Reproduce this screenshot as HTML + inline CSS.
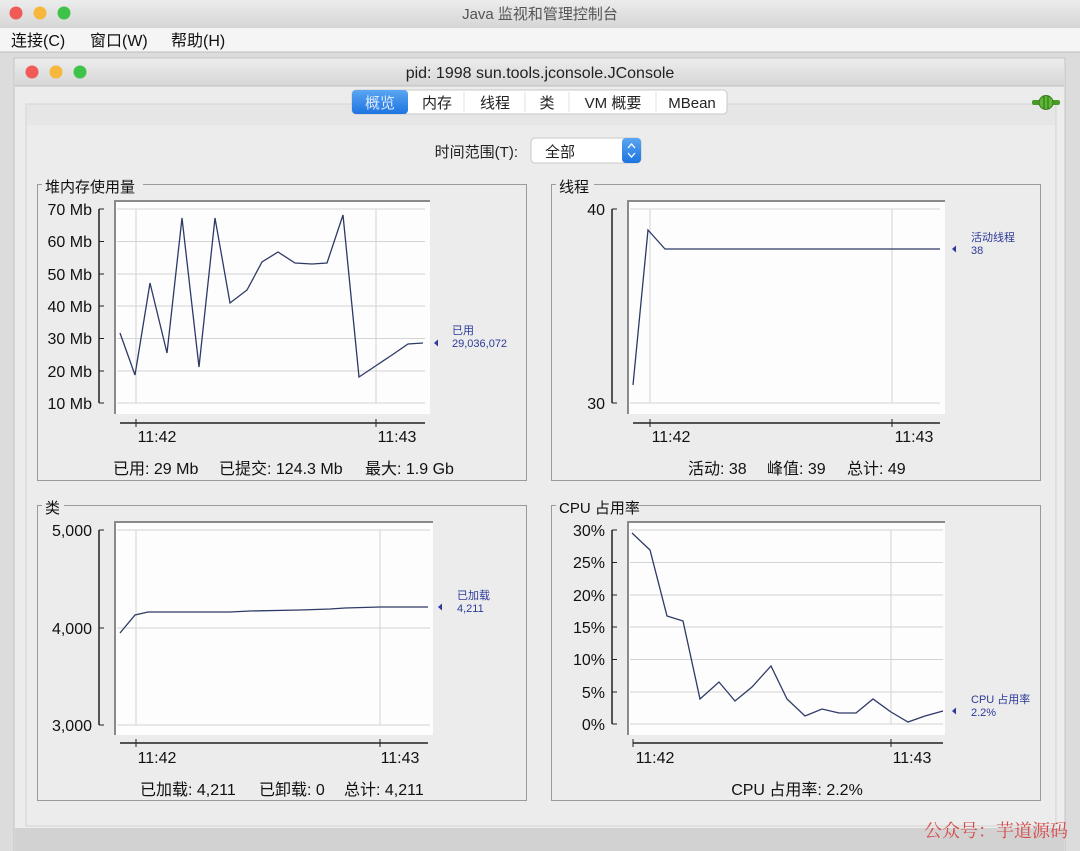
<!DOCTYPE html>
<html><head><meta charset="utf-8"><style>
html,body{margin:0;padding:0;background:#dedede;}
svg{display:block;font-family:"Liberation Sans","Noto Sans CJK SC",sans-serif;}
</style></head><body>
<svg width="1080" height="851" viewBox="0 0 1080 851" xmlns="http://www.w3.org/2000/svg">
<defs>
<linearGradient id="tb" x1="0" y1="0" x2="0" y2="1"><stop offset="0" stop-color="#ececec"/><stop offset="1" stop-color="#d6d6d6"/></linearGradient>
<linearGradient id="blue" x1="0" y1="0" x2="0" y2="1"><stop offset="0" stop-color="#5aa6f2"/><stop offset="1" stop-color="#1e74e0"/></linearGradient>
</defs>
<rect x="0" y="0" width="1080" height="851" fill="#dcdcdc"/>
<rect x="0" y="0" width="1080" height="28" fill="url(#tb)"/>
<circle cx="16" cy="13" r="6.5" fill="#f05c55"/><circle cx="40" cy="13" r="6.5" fill="#f6b73c"/><circle cx="64" cy="13" r="6.5" fill="#3fc24a"/>
<text x="540" y="19" font-size="15" fill="#555" text-anchor="middle">Java 监视和管理控制台</text>
<rect x="0" y="28" width="1080" height="24" fill="#f5f5f5"/>
<line x1="0" y1="52" x2="1080" y2="52" stroke="#bdbdbd"/>
<text y="46" font-size="16" fill="#111"><tspan x="11">连接(C)</tspan><tspan x="90">窗口(W)</tspan><tspan x="171">帮助(H)</tspan></text>
<rect x="14" y="58" width="1051" height="800" fill="#ececec" stroke="#c4c4c4"/>
<rect x="15" y="59" width="1049" height="27" fill="url(#tb)"/>
<line x1="15" y1="86" x2="1064" y2="86" stroke="#c0c0c0"/>
<circle cx="32" cy="72" r="6.5" fill="#f05c55"/><circle cx="56" cy="72" r="6.5" fill="#f6b73c"/><circle cx="80" cy="72" r="6.5" fill="#3fc24a"/>
<text x="540" y="78" font-size="16" fill="#222" text-anchor="middle">pid: 1998 sun.tools.jconsole.JConsole</text>
<rect x="26" y="104" width="1030" height="722" fill="#e6e6e6" stroke="#d6d6d6"/>
<rect x="27" y="125" width="1028" height="700" fill="#ececec"/>
<rect x="352" y="90" width="375" height="24" rx="4" fill="#fff" stroke="#c8c8c8"/>
<rect x="352" y="90" width="56" height="24" rx="4" fill="url(#blue)"/>
<g stroke="#e0e0e0"><line x1="464" y1="92" x2="464" y2="112"/><line x1="525" y1="92" x2="525" y2="112"/><line x1="569" y1="92" x2="569" y2="112"/><line x1="656" y1="92" x2="656" y2="112"/></g>
<g font-size="15" fill="#222" text-anchor="middle">
<text x="380" y="108" fill="#dbe9fb">概览</text><text x="437" y="108">内存</text><text x="495" y="108">线程</text><text x="547" y="108">类</text><text x="613" y="108">VM 概要</text><text x="692" y="108">MBean</text></g>
<g><rect x="1032" y="100" width="28" height="5" rx="2" fill="#4a9a2a"/><ellipse cx="1046" cy="102.5" rx="7" ry="7" fill="#5cb832" stroke="#3a7a1e"/><line x1="1044" y1="96" x2="1044" y2="109" stroke="#2e6a18"/><line x1="1048" y1="96" x2="1048" y2="109" stroke="#2e6a18"/></g>
<text x="518" y="157" font-size="15" fill="#222" text-anchor="end">时间范围(T):</text>
<rect x="531" y="138" width="110" height="25" rx="4" fill="#fff" stroke="#c8c8c8"/>
<rect x="622" y="138" width="19" height="25" rx="4" fill="url(#blue)"/>
<path d="M628 148 l3.5 -4 l3.5 4 M628 153 l3.5 4 l3.5 -4" fill="none" stroke="#fff" stroke-width="1.3"/>
<text x="545" y="157" font-size="15" fill="#222">全部</text>

<g fill="none" stroke="#9a9a9a">
<rect x="37.5" y="184.5" width="489" height="296"/>
<rect x="551.5" y="184.5" width="489" height="296"/>
<rect x="37.5" y="505.5" width="489" height="295"/>
<rect x="551.5" y="505.5" width="489" height="295"/>
</g>
<g font-size="15" fill="#111">
<rect x="42" y="176" width="101" height="16" fill="#ececec"/><text x="45" y="192">堆内存使用量</text>
<rect x="556" y="176" width="38" height="16" fill="#ececec"/><text x="559" y="192">线程</text>
<rect x="42" y="497" width="22" height="16" fill="#ececec"/><text x="45" y="513">类</text>
<rect x="556" y="497" width="70" height="16" fill="#ececec"/><text x="559" y="513">CPU 占用率</text>
</g>

<!-- Heap -->
<rect x="115" y="201" width="315" height="213" fill="#fdfdfd"/>
<path d="M115 414 V201 H430" fill="none" stroke="#8a8a8a" stroke-width="2"/>
<g stroke="#d4d4d4"><line x1="117" y1="209" x2="425" y2="209"/><line x1="117" y1="241.5" x2="425" y2="241.5"/><line x1="117" y1="274" x2="425" y2="274"/><line x1="117" y1="306" x2="425" y2="306"/><line x1="117" y1="338.5" x2="425" y2="338.5"/><line x1="117" y1="371" x2="425" y2="371"/><line x1="117" y1="403" x2="425" y2="403"/><line x1="136" y1="209" x2="136" y2="403"/><line x1="376" y1="209" x2="376" y2="403"/></g>
<g stroke="#222" stroke-width="1.5"><line x1="99" y1="209" x2="99" y2="403"/><line x1="120" y1="423" x2="425" y2="423"/></g>
<g stroke="#222"><path d="M99 209h5M99 241.5h5M99 274h5M99 306h5M99 338.5h5M99 371h5M99 403h5"/><path d="M136 419v8M376 419v8"/></g>
<g font-size="16" fill="#111" text-anchor="end"><text x="92" y="215">70 Mb</text><text x="92" y="247">60 Mb</text><text x="92" y="280">50 Mb</text><text x="92" y="312">40 Mb</text><text x="92" y="344">30 Mb</text><text x="92" y="377">20 Mb</text><text x="92" y="409">10 Mb</text></g>
<g font-size="16" fill="#111" text-anchor="middle"><text x="157" y="442">11:42</text><text x="397" y="442">11:43</text></g>
<polyline fill="none" stroke="#2d3a66" stroke-width="1.3" points="120,333 135,375 150,283 167,353 182,218 199,367 215,218 230,303 247,290 262,262 278,252 295,263 312,264 327,263 343,215 359,377 377,365 392,355 408,344 423,343"/>
<path d="M434 343 l4 -3.5 v7z" fill="#2d3a99"/>
<g font-size="11" fill="#2d3a99"><text x="452" y="334">已用</text><text x="452" y="347">29,036,072</text></g>
<text y="474" font-size="16" fill="#111"><tspan x="113">已用: 29 Mb</tspan><tspan x="219">已提交: 124.3 Mb</tspan><tspan x="365">最大: 1.9 Gb</tspan></text>

<!-- Threads -->
<rect x="628" y="201" width="317" height="213" fill="#fdfdfd"/>
<path d="M628 414 V201 H945" fill="none" stroke="#8a8a8a" stroke-width="2"/>
<g stroke="#d4d4d4"><line x1="630" y1="209" x2="940" y2="209"/><line x1="630" y1="403" x2="940" y2="403"/><line x1="650" y1="209" x2="650" y2="403"/><line x1="892" y1="209" x2="892" y2="403"/></g>
<g stroke="#222" stroke-width="1.5"><line x1="612" y1="209" x2="612" y2="403"/><line x1="633" y1="423" x2="940" y2="423"/></g>
<g stroke="#222"><path d="M612 209h5M612 403h5"/><path d="M650 419v8M892 419v8"/></g>
<g font-size="16" fill="#111" text-anchor="end"><text x="605" y="215">40</text><text x="605" y="409">30</text></g>
<g font-size="16" fill="#111" text-anchor="middle"><text x="671" y="442">11:42</text><text x="914" y="442">11:43</text></g>
<polyline fill="none" stroke="#2d3a66" stroke-width="1.3" points="633,385 648,230 665,249 940,249"/>
<path d="M952 249 l4 -3.5 v7z" fill="#2d3a99"/>
<g font-size="11" fill="#2d3a99"><text x="971" y="241">活动线程</text><text x="971" y="254">38</text></g>
<text y="474" font-size="16" fill="#111"><tspan x="688">活动: 38</tspan><tspan x="767">峰值: 39</tspan><tspan x="847">总计: 49</tspan></text>

<!-- Classes -->
<rect x="115" y="522" width="318" height="213" fill="#fdfdfd"/>
<path d="M115 735 V522 H433" fill="none" stroke="#8a8a8a" stroke-width="2"/>
<g stroke="#d4d4d4"><line x1="117" y1="530" x2="430" y2="530"/><line x1="117" y1="628" x2="430" y2="628"/><line x1="117" y1="725" x2="430" y2="725"/><line x1="136" y1="530" x2="136" y2="725"/><line x1="380" y1="530" x2="380" y2="725"/></g>
<g stroke="#222" stroke-width="1.5"><line x1="99" y1="530" x2="99" y2="725"/><line x1="120" y1="743" x2="428" y2="743"/></g>
<g stroke="#222"><path d="M99 530h5M99 628h5M99 725h5"/><path d="M136 739v8M380 739v8"/></g>
<g font-size="16" fill="#111" text-anchor="end"><text x="92" y="536">5,000</text><text x="92" y="634">4,000</text><text x="92" y="731">3,000</text></g>
<g font-size="16" fill="#111" text-anchor="middle"><text x="157" y="763">11:42</text><text x="400" y="763">11:43</text></g>
<polyline fill="none" stroke="#2d3a66" stroke-width="1.3" points="120,633 135,615 148,612 230,612 250,611 300,610 330,609 345,608 380,607 428,607"/>
<path d="M438 607 l4 -3.5 v7z" fill="#2d3a99"/>
<g font-size="11" fill="#2d3a99"><text x="457" y="599">已加载</text><text x="457" y="612">4,211</text></g>
<text y="795" font-size="16" fill="#111"><tspan x="140">已加载: 4,211</tspan><tspan x="259">已卸载: 0</tspan><tspan x="344">总计: 4,211</tspan></text>

<!-- CPU -->
<rect x="628" y="522" width="317" height="213" fill="#fdfdfd"/>
<path d="M628 735 V522 H945" fill="none" stroke="#8a8a8a" stroke-width="2"/>
<g stroke="#d4d4d4"><line x1="630" y1="530" x2="943" y2="530"/><line x1="630" y1="562.5" x2="943" y2="562.5"/><line x1="630" y1="595" x2="943" y2="595"/><line x1="630" y1="627" x2="943" y2="627"/><line x1="630" y1="659.5" x2="943" y2="659.5"/><line x1="630" y1="692" x2="943" y2="692"/><line x1="630" y1="724" x2="943" y2="724"/><line x1="891" y1="530" x2="891" y2="724"/></g>
<g stroke="#222" stroke-width="1.5"><line x1="612" y1="530" x2="612" y2="724"/><line x1="633" y1="743" x2="943" y2="743"/></g>
<g stroke="#222"><path d="M612 530h5M612 562.5h5M612 595h5M612 627h5M612 659.5h5M612 692h5M612 724h5"/><path d="M633 739v8M891 739v8"/></g>
<g font-size="16" fill="#111" text-anchor="end"><text x="605" y="536">30%</text><text x="605" y="568">25%</text><text x="605" y="601">20%</text><text x="605" y="633">15%</text><text x="605" y="665">10%</text><text x="605" y="698">5%</text><text x="605" y="730">0%</text></g>
<g font-size="16" fill="#111" text-anchor="middle"><text x="655" y="763">11:42</text><text x="912" y="763">11:43</text></g>
<polyline fill="none" stroke="#2d3a66" stroke-width="1.3" points="632,533 650,550 667,616 683,621 700,699 719,682 735,701 752,687 771,666 787,699 805,716 822,709 839,713 856,713 873,699 891,712 908,722 925,716 943,711"/>
<path d="M952 711 l4 -3.5 v7z" fill="#2d3a99"/>
<g font-size="11" fill="#2d3a99"><text x="971" y="703">CPU 占用率</text><text x="971" y="716">2.2%</text></g>
<text x="797" y="795" font-size="16" fill="#111" text-anchor="middle">CPU 占用率: 2.2%</text>

<rect x="15" y="828" width="1049" height="23" fill="#d2d2d2"/>
<text x="1068" y="837" font-size="18" fill="#d64a4a" text-anchor="end" font-family="'Noto Serif CJK SC','Noto Sans CJK SC',serif">公众号：芋道源码</text>
</svg>
</body></html>
